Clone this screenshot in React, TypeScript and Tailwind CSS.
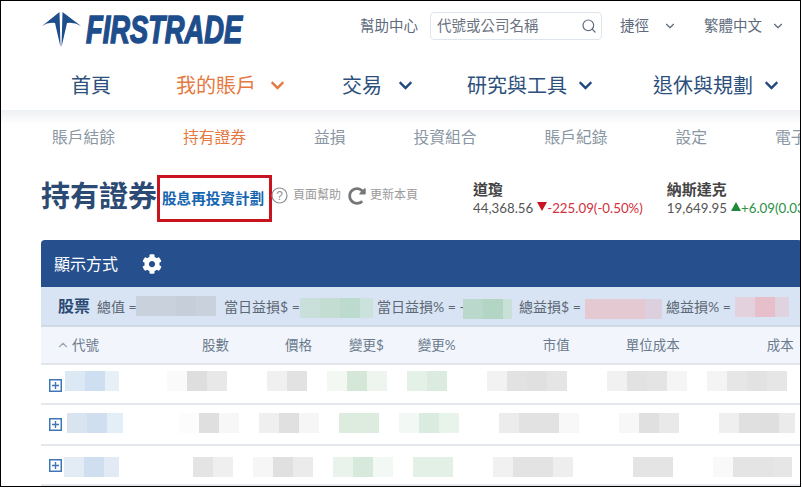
import { Search, ChevronDown, ChevronUp } from "lucide-react";
import { FaChevronDown, FaCog, FaRedoAlt } from "react-icons/fa";

type Cell = { ml: string; tiles: string[] };

const rows: { cls: string; iconCls: string; tileCls: string; cells: Cell[] }[] = [
  {
    cls: "h-10",
    iconCls: "mt-[14px]",
    tileCls: "ml-[3px] mt-[6px]",
    cells: [
      { ml: "ml-0", tiles: ["w-5 bg-[#dce8f3]", "w-5 bg-[#cddff0]", "w-[14px] bg-[#e8f0f7]"] },
      { ml: "ml-12", tiles: ["w-5 bg-[#fbfafa]", "w-5 bg-[#dedede]", "w-5 bg-[#e8e8e8]"] },
      { ml: "ml-10", tiles: ["w-5 bg-[#f0f0f0]", "w-5 bg-[#e2e2e2]"] },
      { ml: "ml-5", tiles: ["w-5 bg-[#f3f8f3]", "w-5 bg-[#d5e8d7]", "w-5 bg-[#eef5ef]"] },
      { ml: "ml-5", tiles: ["w-5 bg-[#e3f1e6]", "w-5 bg-[#dcebe0]"] },
      { ml: "ml-10", tiles: ["w-5 bg-[#f2f2f2]", "w-5 bg-[#e2e2e2]", "w-5 bg-[#e0e0e0]", "w-5 bg-[#e5e5e5]"] },
      { ml: "ml-10", tiles: ["w-5 bg-[#f1f1f1]", "w-5 bg-[#e2e2e2]", "w-5 bg-[#e4e4e4]", "w-5 bg-[#f5f5f5]"] },
      { ml: "ml-5", tiles: ["w-5 bg-[#f4f4f4]", "w-5 bg-[#e6e6e6]", "w-5 bg-[#e2e2e2]", "w-5 bg-[#e6e6e6]"] },
    ],
  },
  {
    cls: "h-[41px]",
    iconCls: "mt-[13px]",
    tileCls: "ml-[5px] mt-2",
    cells: [
      { ml: "ml-0", tiles: ["w-5 bg-[#d8e5f1]", "w-5 bg-[#cfdfef]", "w-4 bg-[#e4eef6]"] },
      { ml: "ml-14", tiles: ["w-5 bg-[#fcfcfc]", "w-5 bg-[#dfdfdf]", "w-5 bg-[#f7f7f7]"] },
      { ml: "ml-5", tiles: ["w-5 bg-[#efefef]", "w-5 bg-[#e0e0e0]", "w-5 bg-[#f6f6f6]"] },
      { ml: "ml-5", tiles: ["w-5 bg-[#dcecdf]", "w-5 bg-[#ddecdf]"] },
      { ml: "ml-5", tiles: ["w-5 bg-[#f2f8f3]", "w-5 bg-[#d9ecdf]", "w-5 bg-[#e8f4ea]"] },
      { ml: "ml-10", tiles: ["w-5 bg-[#ececec]", "w-5 bg-[#e2e2e2]", "w-5 bg-[#e2e2e2]", "w-5 bg-[#f8f8f8]"] },
      { ml: "ml-10", tiles: ["w-5 bg-[#f7f7f7]", "w-5 bg-[#e0e0e0]", "w-5 bg-[#e9e9e9]"] },
      { ml: "ml-10", tiles: ["w-5 bg-[#efefef]", "w-5 bg-[#e0e0e0]", "w-5 bg-[#dfdfdf]", "w-4 bg-[#ebebeb]"] },
    ],
  },
  {
    cls: "h-10",
    iconCls: "mt-[13px]",
    tileCls: "ml-[2px] mt-[11px]",
    cells: [
      { ml: "ml-0", tiles: ["w-5 bg-[#e3ecf5]", "w-5 bg-[#cfdfef]", "w-[15px] bg-[#e2ebf5]"] },
      { ml: "ml-[74px]", tiles: ["w-5 bg-[#e4e4e4]", "w-5 bg-[#efefef]"] },
      { ml: "ml-5", tiles: ["w-5 bg-[#f6f6f6]", "w-5 bg-[#e0e0e0]", "w-5 bg-[#ebebeb]"] },
      { ml: "ml-5", tiles: ["w-5 bg-[#e9f3eb]", "w-5 bg-[#d7e9da]", "w-5 bg-[#f2f8f3]"] },
      { ml: "ml-5", tiles: ["w-5 bg-[#e2f0e5]", "w-5 bg-[#e2f0e5]"] },
      { ml: "ml-10", tiles: ["w-5 bg-[#f1f1f1]", "w-5 bg-[#e3e3e3]", "w-5 bg-[#e3e3e3]", "w-5 bg-[#eeeeee]"] },
      { ml: "ml-15", tiles: ["w-5 bg-[#e4e4e4]", "w-5 bg-[#e4e4e4]"] },
      { ml: "ml-10", tiles: ["w-5 bg-[#f9f9f9]", "w-5 bg-[#e4e4e4]", "w-5 bg-[#e4e4e4]", "w-[19px] bg-[#e6e6e6]"] },
    ],
  },
];

function Tiles({ tiles, cls = "" }: { tiles: string[]; cls?: string }) {
  return (
    <div className={`flex h-5 shrink-0 ${cls}`}>
      {tiles.map((t, i) => (
        <div key={i} className={`h-5 ${t}`} />
      ))}
    </div>
  );
}

function PlusBox({ cls }: { cls: string }) {
  return (
    <svg width="13" height="13" viewBox="0 0 13 13" className={`shrink-0 ${cls}`}>
      <rect x="0.75" y="0.75" width="11.5" height="11.5" fill="#fff" stroke="#3f77b5" strokeWidth="1.5" />
      <path d="M6.5 3v7M3 6.5h7" stroke="#3f77b5" strokeWidth="1.4" />
    </svg>
  );
}

function Logo() {
  return (
    <div className="flex items-center h-[38px]">
      <svg width="40" height="37" viewBox="0 0 40 37" className="shrink-0">
        <path d="M1 15 L18.5 1 L19.5 36 L14 12 Q7 11 1 15Z" fill="#1e4d8c" />
        <path d="M21.5 1 L40 15 Q33 11 26 12 L20.5 36Z" fill="#1e4d8c" />
      </svg>
      <span className="ml-[5px] w-[158px] font-['Liberation_Sans'] font-bold italic text-[39px] leading-none text-[#1e4d8c] origin-left scale-x-[0.7] whitespace-nowrap [-webkit-text-stroke:1.5px_#1e4d8c]">
        FIRSTRADE
      </span>
    </div>
  );
}

export default function App() {
  return (
    <div className="relative w-[801px] h-[487px] border border-black bg-white overflow-hidden font-['Lato','Noto_Sans_CJK_TC',sans-serif]">
      {/* Header */}
      <div className="flex items-start h-[53px]">
        <div className="ml-10 mt-[9px]">
          <Logo />
        </div>
        <div className="ml-[116px] mt-[11px] flex items-center h-7 text-[14.5px] text-[#5e6b7d] whitespace-nowrap">
          <span>幫助中心</span>
          <div className="ml-3 w-[172px] h-7 flex items-center justify-between rounded border border-[#dfe5ec] pl-[6px] pr-1">
            <span className="text-[#6b7280]">代號或公司名稱</span>
            <Search size={16} strokeWidth={1.8} className="text-[#5e6b7d]" />
          </div>
          <span className="ml-[18px]">捷徑</span>
          <ChevronDown size={14} className="ml-[14px]" />
          <span className="ml-[27px]">繁體中文</span>
          <ChevronDown size={14} className="ml-[9px]" />
        </div>
      </div>

      {/* Main nav */}
      <div className="flex items-center h-[56px] text-[20px] text-[#2c4f7c] pt-[6px] whitespace-nowrap">
        <span className="ml-[70px]">首頁</span>
        <span className="ml-[65px] text-[#e5793f]">我的賬戶</span>
        <FaChevronDown size={15} className="ml-[14px] text-[#e5793f]" />
        <span className="ml-[57px]">交易</span>
        <FaChevronDown size={15} className="ml-[16px] text-[#23497f]" />
        <span className="ml-[54px]">研究與工具</span>
        <FaChevronDown size={15} className="ml-[11px] text-[#23497f]" />
        <span className="ml-[60px]">退休與規劃</span>
        <FaChevronDown size={15} className="ml-[11px] text-[#23497f]" />
      </div>

      {/* Sub nav */}
      <div className="flex items-center h-[50px] pt-[3px] text-[15.75px] text-[#8a96a3] bg-gradient-to-b from-[#eef1f4] to-white to-[30%] whitespace-nowrap">
        <span className="ml-[51px]">賬戶結餘</span>
        <span className="ml-[68px] text-[#e5793f]">持有證券</span>
        <span className="ml-[68px]">益損</span>
        <span className="ml-[68px]">投資組合</span>
        <span className="ml-[68px]">賬戶紀錄</span>
        <span className="ml-[68px]">設定</span>
        <span className="ml-[68px]">電子</span>
      </div>

      {/* Title row */}
      <div className="flex items-start h-[80px] whitespace-nowrap">
        <h1 className="ml-10 mt-[16px] shrink-0 text-[29px] leading-10 font-bold text-[#2b4a74]">持有證券</h1>
        <div className="mt-[15px] shrink-0 w-[115px] h-[47px] border-[3px] border-[#c8141e] flex items-center pl-[2px] pt-[1px] text-[14.6px] font-bold text-[#1565b0]">
          股息再投資計劃
        </div>
        <svg width="17" height="17" viewBox="0 0 17 17" className="mt-[27px] -ml-[1px] shrink-0">
          <circle cx="8.5" cy="8.5" r="7.5" fill="none" stroke="#8f8f8f" strokeWidth="1.2" />
          <text x="8.5" y="12.6" textAnchor="middle" fontSize="12" fill="#8f8f8f" fontFamily="Liberation Sans">?</text>
        </svg>
        <span className="ml-[5px] mt-[25px] shrink-0 text-[12px] leading-[20px] text-[#9a9a9a]">頁面幫助</span>
        <FaRedoAlt size={18} className="ml-[7px] mt-[27px] shrink-0 text-[#777]" />
        <span className="ml-1 mt-[25px] shrink-0 text-[12px] leading-[20px] text-[#9a9a9a]">更新本頁</span>
        <div className="ml-[55px] mt-[19px] shrink-0">
          <div className="text-[15px] leading-[20px] font-bold text-[#444]">道瓊</div>
          <div className="flex items-center text-[13.3px] leading-[18px] text-[#555]">
            44,368.56
            <svg width="10" height="9" viewBox="0 0 10 9" className="ml-1 mb-[3px]"><path d="M0 0h10L5 9Z" fill="#c8141e" /></svg>
            <span className="text-[#d2303a]">-225.09(-0.50%)</span>
          </div>
        </div>
        <div className="ml-[24px] mt-[19px] shrink-0">
          <div className="text-[15px] leading-[20px] font-bold text-[#444]">納斯達克</div>
          <div className="flex items-center text-[13.3px] leading-[18px] text-[#555]">
            19,649.95
            <svg width="10" height="9" viewBox="0 0 10 9" className="ml-1 mb-[3px]"><path d="M0 9h10L5 0Z" fill="#1d8a3a" /></svg>
            <span className="text-[#2a9045]">+6.09(0.03%)</span>
          </div>
        </div>
      </div>

      {/* Table */}
      <div className="ml-10 w-[761px]">
        <div className="h-[47px] bg-[#264f8d] rounded-t flex items-center text-white text-[16px]">
          <span className="ml-[13px]">顯示方式</span>
          <FaCog size={20} className="ml-6" />
        </div>
        <div className="h-10 bg-[#d8e4f3] border-b-2 border-[#cfd9e6] flex items-center text-[14px] text-[#5c6773] whitespace-nowrap">
          <span className="ml-[17px] text-[16px] font-bold text-[#2b4a74]">股票</span>
          <span className="ml-[7px] w-[39px]">總值 =</span>
          <Tiles tiles={["w-5 bg-[#c9d1dc]", "w-5 bg-[#c9d1dc]", "w-5 bg-[#c5ced9]", "w-5 bg-[#c9d1dc]"]} />
          <span className="ml-2 w-[76px]">當日益損$ =</span>
          <Tiles cls="mt-[4px]" tiles={["w-5 bg-[#c9e0da]", "w-5 bg-[#c3ddd3]", "w-5 bg-[#bcdacd]", "w-[13px] bg-[#cbe2dc]"]} />
          <span className="ml-1 w-[86px]">當日益損% = -</span>
          <Tiles cls="mt-[6px]" tiles={["w-5 bg-[#bbd8cd]", "w-5 bg-[#b3d6c4]", "w-[9px] bg-[#c8e0d7]"]} />
          <span className="ml-[7px] w-[66px]">總益損$ =</span>
          <Tiles cls="mt-[6px]" tiles={["w-5 bg-[#e5c9d2]", "w-5 bg-[#e5c9d2]", "w-5 bg-[#e5c9d2]", "w-[17px] bg-[#dcd0de]"]} />
          <span className="ml-1 w-[69px]">總益損% =</span>
          <Tiles cls="mt-[2px]" tiles={["w-5 bg-[#e4d1de]", "w-5 bg-[#e6bfca]", "w-[14px] bg-[#e0d3e0]"]} />
        </div>
        <div className="h-[38px] bg-[#f2f6fc] border-b-2 border-[#e2e6ea] flex items-center text-[13.5px] text-[#6b7a8c] whitespace-nowrap">
          <ChevronUp size={14} className="ml-[15px] text-[#9aa5b1]" />
          <span className="ml-[2px]">代號</span>
          <span className="ml-[103px]">股數</span>
          <span className="ml-[56px]">價格</span>
          <span className="ml-[37px]">變更$</span>
          <span className="ml-[34px]">變更%</span>
          <span className="ml-[87px]">市值</span>
          <span className="ml-[56px]">單位成本</span>
          <span className="ml-[87px]">成本</span>
        </div>
        {rows.map((r, i) => (
          <div key={i} className={`${r.cls} border-b-2 border-[#e4e7eb] flex items-start pl-2`}>
            <PlusBox cls={r.iconCls} />
            <div className={`flex ${r.tileCls}`}>
              {r.cells.map((c, j) => (
                <Tiles key={j} tiles={c.tiles} cls={c.ml} />
              ))}
            </div>
          </div>
        ))}
      </div>
    </div>
  );
}
